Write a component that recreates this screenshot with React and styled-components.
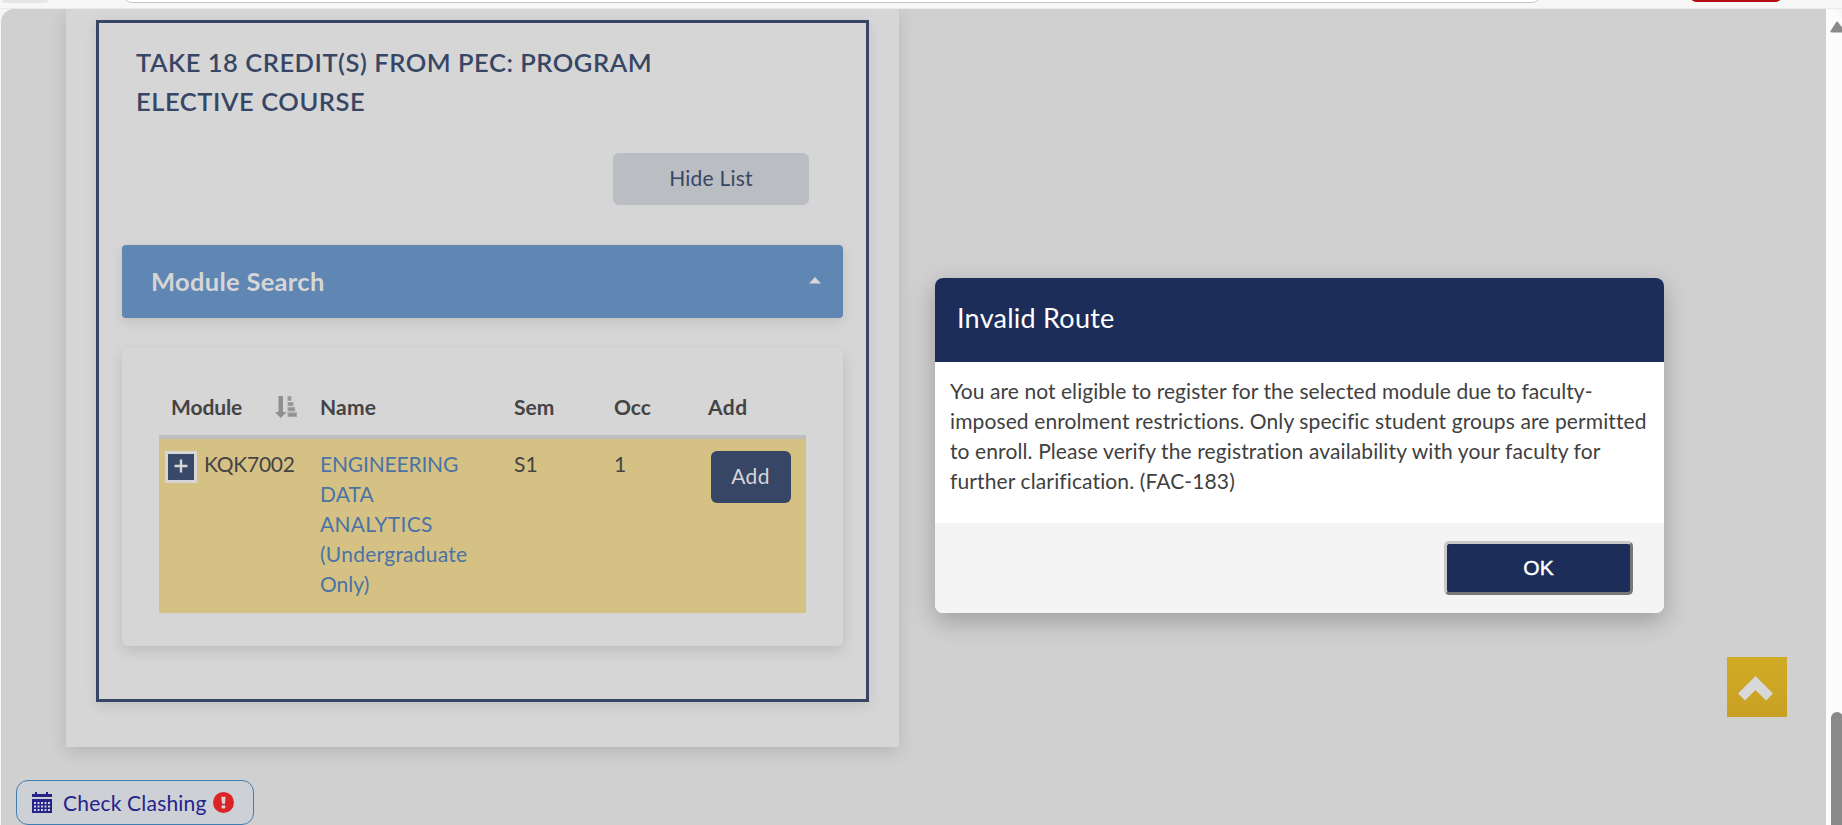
import React from 'react';
import styled, { createGlobalStyle } from 'styled-components';

const GlobalStyle = createGlobalStyle`
  *, *::before, *::after { box-sizing: border-box; }
  body {
    margin: 0;
    background: #f7f7f7;
    color: #444;
    font-family: Lato, "Open Sans", sans-serif;
    font-size: 21px;
    line-height: 30px;
    font-variant-ligatures: none;
    overflow: hidden;
  }
  button { font: inherit; padding: 0; cursor: pointer; }
`;

const Window = styled.div`
  height: 825px;
  width: 1842px;
  display: flex;
  flex-direction: column;
  overflow: hidden;
`;

const BrowserBar = styled.div`
  flex: none;
  height: 9px;
  display: flex;
  align-items: flex-start;
  padding-left: 2px;
  background: #f7f7f7;
  border-bottom: 1px solid #ebebeb;
`;

const BarTab = styled.div`
  width: 46px;
  height: 3px;
  border-radius: 0 0 5px 5px;
  background: #e6e6e6;
`;

const AddressBar = styled.div`
  width: 1418px;
  height: 18px;
  margin: -15px 0 0 75px;
  border: 1px solid #c8c8c8;
  border-radius: 9px;
  background: #fff;
`;

const UpdateBadge = styled.div`
  width: 90px;
  height: 18px;
  margin: -16.5px 0 0 150px;
  border-radius: 5px;
  background: #b50d12;
`;

const Viewport = styled.div`
  flex: 1;
  display: flex;
  padding-left: 1px;
`;

const Page = styled.main`
  position: relative;
  width: 1825px;
  height: 816px;
  padding-left: 65px;
  border-top-left-radius: 13px;
  background: #d0d0d0;
  overflow: hidden;
`;

const ScrollTrack = styled.div`
  width: 16px;
  height: 816px;
  display: flex;
  flex-direction: column;
  align-items: flex-start;
  padding: 12px 0 0 4px;
  background: #fcfcfc;
  border-top-right-radius: 12px;
  overflow: hidden;

  svg { display: block; flex: none; }
`;

const ScrollThumb = styled.div`
  flex: none;
  width: 12px;
  height: 140px;
  margin: 679px 0 0 1px;
  border-radius: 6px;
  background: #8a8a8a;
`;

const Panel = styled.section`
  width: 833px;
  height: 738px;
  padding: 11px 30px 45px;
  background: #d6d6d6;
  box-shadow: 0 5px 16px rgba(0, 0, 0, 0.13);
`;

const Group = styled.div`
  height: 682px;
  padding: 20px 23px 0;
  border: 3px solid #374665;
  box-shadow: 0 4px 12px rgba(0, 0, 0, 0.09);
`;

const GroupTitle = styled.h2`
  width: 560px;
  margin: 0 0 32px 14px;
  color: #374665;
  font-size: 25.5px;
  font-weight: 600;
  line-height: 39px;
`;

const HideButton = styled.button`
  display: block;
  width: 196px;
  height: 52px;
  margin: 0 34px 40px auto;
  padding-bottom: 2px;
  border: 0;
  border-radius: 6px;
  background: #babdc1;
  color: #374665;
`;

const SearchBar = styled.div`
  height: 73px;
  margin-bottom: 30px;
  padding: 0 22px 2px 29px;
  display: flex;
  align-items: center;
  justify-content: space-between;
  border-radius: 4px;
  background: #6086b3;
  color: #d6d6d6;
  font-size: 25.5px;
  font-weight: 700;
  letter-spacing: 0.3px;
  box-shadow: 0 4px 12px rgba(0, 0, 0, 0.1);

  svg { display: block; margin-top: -1px; }
`;

const Card = styled.div`
  height: 298px;
  padding: 32px 37px 33px;
  border-radius: 6px;
  background: #d6d6d6;
  box-shadow: 0 5px 14px rgba(0, 0, 0, 0.12);
`;

const columns = 'grid-template-columns: 149px 193px 100px 94px 111px;';

const HeadRow = styled.div`
  display: grid;
  ${columns}
  height: 59px;
  border-bottom: 4px solid #bdbdbd;
  font-weight: 700;
`;

const HeadCell = styled.div`
  display: flex;
  align-items: center;
  justify-content: space-between;
  padding: 0 11px 2px ${(p) => p.$inset ?? 13}px;
  letter-spacing: ${(p) => p.$spacing ?? 0}px;
`;

const BodyRow = styled.div`
  display: grid;
  ${columns}
  height: 174px;
  padding-top: 10px;
  background: #d5c184;
`;

const Cell = styled.div`
  padding-left: 13px;
`;

const CodeCell = styled.div`
  display: flex;
  align-items: flex-start;
  gap: 7px;
  padding-left: 6px;
  letter-spacing: -0.25px;
`;

const ExpandButton = styled.button`
  flex: none;
  width: 32px;
  height: 32px;
  margin-top: 2px;
  display: flex;
  align-items: flex-start;
  border: 3px solid #d6d6d6;
  background: #384869;

  svg { display: block; margin: 5px 0 0 6px; }
`;

const ModuleLink = styled.a`
  display: block;
  padding-left: 12px;
  color: #4b73a4;
`;

const Line = styled.span`
  display: block;
  white-space: nowrap;
  letter-spacing: ${(p) => p.$spacing}px;
`;

const AddButton = styled.button`
  width: 80px;
  height: 52px;
  margin: 2px 0 0 16px;
  padding: 0 1px 2px 0;
  border: 0;
  border-radius: 6px;
  background: #374665;
  color: #d6d6d6;
  letter-spacing: 0.4px;
`;

const BackToTop = styled.button`
  position: absolute;
  left: 1726px;
  top: 648px;
  width: 60px;
  height: 60px;
  display: flex;
  align-items: flex-start;
  border: 0;
  background: linear-gradient(#d1aa25, #c8a124);

  svg { display: block; margin: 19px 0 0 11px; }
`;

const ClashButton = styled.button`
  position: absolute;
  left: 15px;
  top: 771px;
  width: 238px;
  height: 45px;
  padding: 0 0 0 15px;
  display: flex;
  align-items: center;
  border: 1px solid #417fb0;
  border-radius: 12px;
  background: #cdd1d5;
  color: #26228c;
  letter-spacing: 0.2px;

  svg { display: block; flex: none; margin-top: -1px; }
  span { margin: 0 6px 0 11px; }
`;

const Dialog = styled.div`
  position: absolute;
  left: 934px;
  top: 269px;
  width: 729px;
  height: 335px;
  display: flex;
  flex-direction: column;
  border-radius: 8px;
  background: #fff;
  box-shadow: 0 8px 24px rgba(0, 0, 0, 0.25);
  color: #404040;
`;

const DialogTitle = styled.div`
  flex: none;
  height: 84px;
  padding: 23px 0 0 22px;
  border-radius: 8px 8px 0 0;
  background: #1b2d58;
  color: #fff;
  font-size: 27px;
  line-height: 33px;
  letter-spacing: 0.25px;
`;

const DialogBody = styled.div`
  flex: 1;
  padding: 14px 0 0 15px;
`;

const DialogFooter = styled.div`
  flex: none;
  height: 90px;
  display: flex;
  justify-content: flex-end;
  padding: 18px 31px 0 0;
  border-radius: 0 0 8px 8px;
  background: #f4f4f4;
`;

const OkButton = styled.button`
  width: 189px;
  height: 54px;
  border: 3px solid;
  border-color: #c8c8c8 #7a7677 #7a7677 #c8c8c8;
  border-radius: 5px;
  background: #1b2d58;
  color: #fff;
  font-family: "Liberation Sans", Arial, sans-serif;
  font-size: 21px;
  -webkit-text-stroke: 0.4px #fff;
`;

const SortIcon = () => (
  <svg width="22" height="22" viewBox="0 0 22 22">
    <path d="M3.500 0H8v16h3.600L5.800 22 0 16h3.500z" fill="#8f8f8f" />
    <path d="M12.500 0h4v5h-4zM12.500 6h6v4.200h-6zM12.500 11h7.700v4.500h-7.700zM12.500 16.300H22V21h-9.500z" fill="#a6a6a6" />
    <path d="M13.500 2.500h2M13.500 8h4M13.500 13.200h5.500M13.500 18.700h7.500" stroke="#8c8c8c" strokeWidth="2" />
  </svg>
);

const CalendarIcon = () => (
  <svg width="20" height="21" viewBox="0 0 20 21" fill="#26228c">
    <path d="M3 0h2v2h9V0h2v2h4v3H0V2h3z" />
    <path
      fillRule="evenodd"
      d="M0 7h20v14H0z M2 10v2h2v-2z M5.500 10v2h2v-2z M9 10v2h2v-2z M12.500 10v2h2v-2z M16 10v2h2v-2z M2 13.500v2h2v-2z M5.500 13.500v2h2v-2z M9 13.500v2h2v-2z M12.500 13.500v2h2v-2z M16 13.500v2h2v-2z M2 17v2h2v-2z M5.500 17v2h2v-2z M9 17v2h2v-2z M12.500 17v2h2v-2z M16 17v2h2v-2z"
    />
  </svg>
);

const AlertIcon = () => (
  <svg width="21" height="21" viewBox="0 0 21 21">
    <circle cx="10.500" cy="10.500" r="10.500" fill="#dc2328" />
    <path d="M8.300 4.800h4.300L12 11.800H9z" fill="#d6d6d6" />
    <rect x="8.600" y="13.200" width="3.700" height="3.300" rx="1" fill="#d6d6d6" />
  </svg>
);

export default function App() {
  return (
    <Window>
      <GlobalStyle />
      <BrowserBar>
        <BarTab />
        <AddressBar />
        <UpdateBadge />
      </BrowserBar>
      <Viewport>
        <Page>
          <Panel>
            <Group>
              <GroupTitle>
                <Line $spacing={0.52}>TAKE 18 CREDIT(S) FROM PEC: PROGRAM</Line>
                <Line $spacing={0.56}>ELECTIVE COURSE</Line>
              </GroupTitle>
              <HideButton><Line $spacing={0.2}>Hide List</Line></HideButton>
              <SearchBar>
                Module Search
                <svg width="12" height="7" viewBox="0 0 12 7">
                  <path d="M6 0l6 6.500H0z" fill="#d6d6d6" />
                </svg>
              </SearchBar>
              <Card>
                <HeadRow>
                  <HeadCell $inset={12} $spacing={-0.1}>Module<SortIcon /></HeadCell>
                  <HeadCell $inset={12} $spacing={0.2}>Name</HeadCell>
                  <HeadCell>Sem</HeadCell>
                  <HeadCell>Occ</HeadCell>
                  <HeadCell $spacing={0.5}>Add</HeadCell>
                </HeadRow>
                <BodyRow>
                  <CodeCell>
                    <ExpandButton aria-label="Expand">
                      <svg width="14" height="14" viewBox="0 0 14 14">
                        <path d="M7 .5v13M.5 7h13" stroke="#d6d6d6" strokeWidth="2.400" />
                      </svg>
                    </ExpandButton>
                    KQK7002
                  </CodeCell>
                  <ModuleLink>
                    <Line $spacing={-0.18}>ENGINEERING</Line>
                    <Line $spacing={0.1}>DATA</Line>
                    <Line $spacing={0.3}>ANALYTICS</Line>
                    <Line $spacing={0.25}>(Undergraduate</Line>
                    <Line $spacing={0}>Only)</Line>
                  </ModuleLink>
                  <Cell>S1</Cell>
                  <Cell>1</Cell>
                  <AddButton>Add</AddButton>
                </BodyRow>
              </Card>
            </Group>
          </Panel>

          <ClashButton>
            <CalendarIcon />
            <span>Check Clashing</span>
            <AlertIcon />
          </ClashButton>

          <BackToTop aria-label="Back to top">
            <svg width="35" height="25" viewBox="0 0 35 25">
              <path d="M17.500 0L35 17.500 28 24.500 17.500 14 7 24.500 0 17.500z" fill="#d8d8d8" />
            </svg>
          </BackToTop>

          <Dialog role="dialog">
            <DialogTitle>Invalid Route</DialogTitle>
            <DialogBody>
              <Line $spacing={0.06}>You are not eligible to register for the selected module due to faculty-</Line>
              <Line $spacing={0.11}>imposed enrolment restrictions. Only specific student groups are permitted</Line>
              <Line $spacing={0.11}>to enroll. Please verify the registration availability with your faculty for</Line>
              <Line $spacing={0.12}>further clarification. (FAC-183)</Line>
            </DialogBody>
            <DialogFooter>
              <OkButton>OK</OkButton>
            </DialogFooter>
          </Dialog>
        </Page>
        <ScrollTrack>
          <svg width="12" height="12" viewBox="0 0 12 12">
            <path d="M7.500 .5L14.500 9.500Q15 11.500 13.500 11.500H2Q-.3 11.500 .8 9.500L6 1.500Q7 0 7.500 .5z" fill="#8a8a8a" />
          </svg>
          <ScrollThumb />
        </ScrollTrack>
      </Viewport>
    </Window>
  );
}
